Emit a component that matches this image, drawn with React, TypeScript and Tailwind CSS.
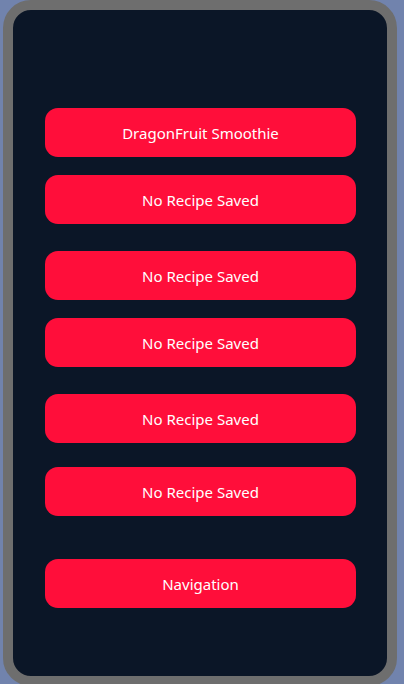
import React from 'react';

const slots = [
  { label: 'DragonFruit Smoothie', gap: 'mt-[98px]' },
  { label: 'No Recipe Saved', gap: 'mt-[18px]' },
  { label: 'No Recipe Saved', gap: 'mt-[27px]' },
  { label: 'No Recipe Saved', gap: 'mt-[18px]' },
  { label: 'No Recipe Saved', gap: 'mt-[27px]' },
  { label: 'No Recipe Saved', gap: 'mt-[24px]' },
];

export default function App() {
  return (
    <div className="h-[684px] w-[404px] overflow-hidden bg-[#7183ad] pl-[3px]">
      <div className="h-[686px] w-[394px] rounded-[28px] border-[10px] border-[#6e6e6e] bg-[#0b1627]">
        <div className="flex flex-col px-[32px]" style={{ fontFamily: '"Noto Sans", "Open Sans", sans-serif' }}>
          {slots.map((s, i) => (
            <button
              key={i}
              className={`${s.gap} flex h-[49px] w-[311px] items-center justify-center rounded-[13px] bg-[#ff0e3a] pt-[2px] text-[15px] text-white`}
            >
              {s.label}
            </button>
          ))}
          <button className="mt-[43px] flex h-[49px] w-[311px] items-center justify-center rounded-[13px] bg-[#ff0e3a] pt-[2px] text-[15px] text-white">
            Navigation
          </button>
        </div>
      </div>
    </div>
  );
}
